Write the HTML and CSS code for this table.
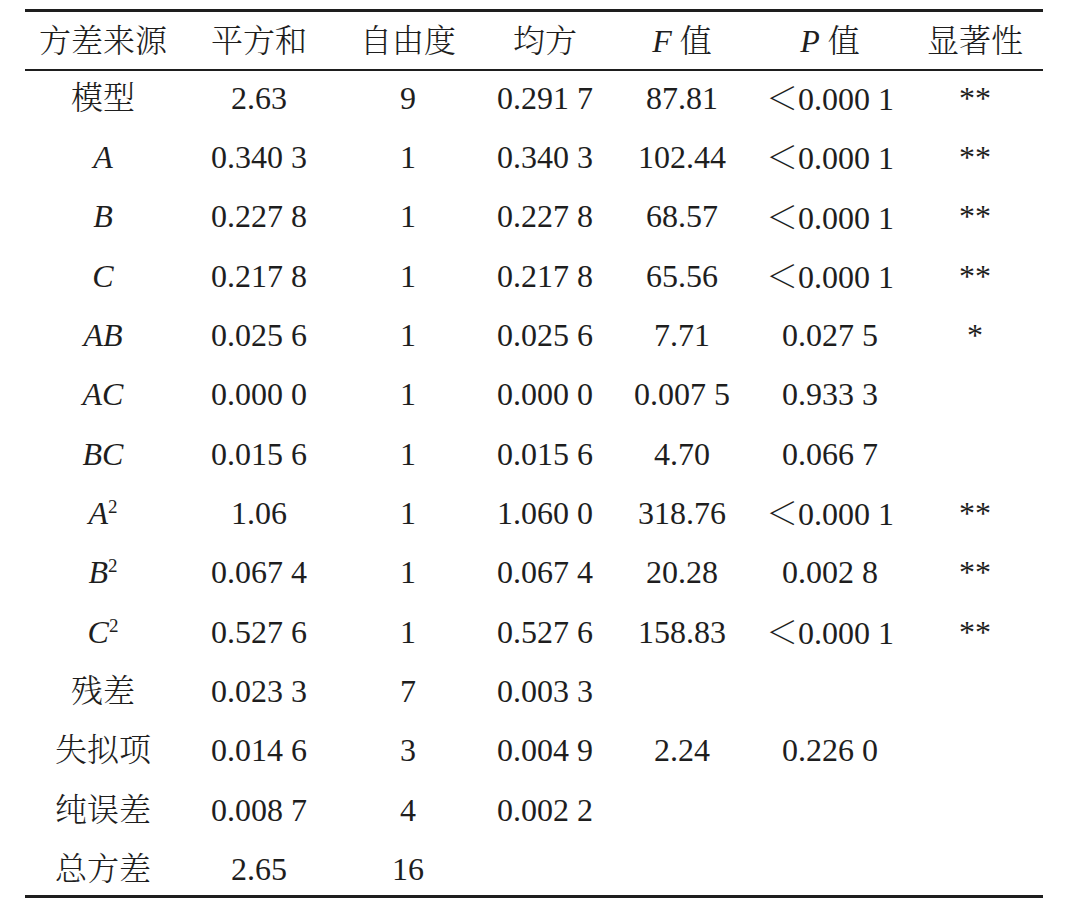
FILE: index.html
```html
<!DOCTYPE html>
<html lang="zh">
<head>
<meta charset="utf-8">
<title>方差分析</title>
<link rel="stylesheet" href="styles.css">
</head>
<body>
<div class="anova" role="table">
  <div class="row head" role="row">
    <div class="cell cjk">方差来源</div><div class="cell cjk">平方和</div><div class="cell cjk">自由度</div><div class="cell cjk">均方</div><div class="cell cjk"><i>F</i> 值</div><div class="cell cjk"><i>P</i> 值</div><div class="cell cjk">显著性</div>
  </div>
  <div class="row" role="row"><div class="cell cjk">模型</div><div class="cell">2.63</div><div class="cell">9</div><div class="cell">0.291 7</div><div class="cell">87.81</div><div class="cell"><span class="lt">＜</span>0.000 1</div><div class="cell">**</div></div>
  <div class="row" role="row"><div class="cell"><i>A</i></div><div class="cell">0.340 3</div><div class="cell">1</div><div class="cell">0.340 3</div><div class="cell">102.44</div><div class="cell"><span class="lt">＜</span>0.000 1</div><div class="cell">**</div></div>
  <div class="row" role="row"><div class="cell"><i>B</i></div><div class="cell">0.227 8</div><div class="cell">1</div><div class="cell">0.227 8</div><div class="cell">68.57</div><div class="cell"><span class="lt">＜</span>0.000 1</div><div class="cell">**</div></div>
  <div class="row" role="row"><div class="cell"><i>C</i></div><div class="cell">0.217 8</div><div class="cell">1</div><div class="cell">0.217 8</div><div class="cell">65.56</div><div class="cell"><span class="lt">＜</span>0.000 1</div><div class="cell">**</div></div>
  <div class="row" role="row"><div class="cell"><i>AB</i></div><div class="cell">0.025 6</div><div class="cell">1</div><div class="cell">0.025 6</div><div class="cell">7.71</div><div class="cell">0.027 5</div><div class="cell">*</div></div>
  <div class="row" role="row"><div class="cell"><i>AC</i></div><div class="cell">0.000 0</div><div class="cell">1</div><div class="cell">0.000 0</div><div class="cell">0.007 5</div><div class="cell">0.933 3</div><div class="cell"></div></div>
  <div class="row" role="row"><div class="cell"><i>BC</i></div><div class="cell">0.015 6</div><div class="cell">1</div><div class="cell">0.015 6</div><div class="cell">4.70</div><div class="cell">0.066 7</div><div class="cell"></div></div>
  <div class="row" role="row"><div class="cell"><i>A</i><sup>2</sup></div><div class="cell">1.06</div><div class="cell">1</div><div class="cell">1.060 0</div><div class="cell">318.76</div><div class="cell"><span class="lt">＜</span>0.000 1</div><div class="cell">**</div></div>
  <div class="row" role="row"><div class="cell"><i>B</i><sup>2</sup></div><div class="cell">0.067 4</div><div class="cell">1</div><div class="cell">0.067 4</div><div class="cell">20.28</div><div class="cell">0.002 8</div><div class="cell">**</div></div>
  <div class="row" role="row"><div class="cell"><i>C</i><sup>2</sup></div><div class="cell">0.527 6</div><div class="cell">1</div><div class="cell">0.527 6</div><div class="cell">158.83</div><div class="cell"><span class="lt">＜</span>0.000 1</div><div class="cell">**</div></div>
  <div class="row" role="row"><div class="cell cjk">残差</div><div class="cell">0.023 3</div><div class="cell">7</div><div class="cell">0.003 3</div><div class="cell"></div><div class="cell"></div><div class="cell"></div></div>
  <div class="row" role="row"><div class="cell cjk">失拟项</div><div class="cell">0.014 6</div><div class="cell">3</div><div class="cell">0.004 9</div><div class="cell">2.24</div><div class="cell">0.226 0</div><div class="cell"></div></div>
  <div class="row" role="row"><div class="cell cjk">纯误差</div><div class="cell">0.008 7</div><div class="cell">4</div><div class="cell">0.002 2</div><div class="cell"></div><div class="cell"></div><div class="cell"></div></div>
  <div class="row last" role="row"><div class="cell cjk">总方差</div><div class="cell">2.65</div><div class="cell">16</div><div class="cell"></div><div class="cell"></div><div class="cell"></div><div class="cell"></div></div>
</div>
</body>
</html>
```
FILE: styles.css
```css
html, body {
  margin: 0;
  padding: 0;
  background: #ffffff;
}

body {
  padding: 9px 0 0 25px;
  color: #1e1e1e;
  font-family: "Liberation Serif", "Noto Serif CJK SC", "Noto Sans CJK SC", serif;
  font-size: 32px;
}

.anova {
  display: flex;
  flex-direction: column;
  width: 1018px;
  border-top: 3px solid #1e1e1e;
  border-bottom: 3px solid #1e1e1e;
}

.row {
  display: grid;
  grid-template-columns: 156px 156px 142px 132px 142px 154px 136px;
  align-items: center;
  box-sizing: border-box;
  height: 59.35px;
  padding-bottom: 6.35px;
  flex: none;
}

.row.head {
  box-sizing: content-box;
  height: 57px;
  padding-bottom: 0;
  border-bottom: 2px solid #1e1e1e;
}

.row.last {
  height: 52.45px;
  padding-bottom: 0;
}

.cell {
  text-align: center;
  white-space: nowrap;
  line-height: 1;
}

.cjk {
  font-weight: 300;
}

.lt {
  font-family: "Noto Serif CJK SC", "Noto Sans CJK SC", sans-serif;
  font-weight: 300;
}

.cell i {
  font-style: italic;
  font-weight: 400;
  font-family: "Liberation Serif", serif;
}

.cell sup {
  font-size: 19px;
  line-height: 0;
  vertical-align: 0.6em;
}
```
